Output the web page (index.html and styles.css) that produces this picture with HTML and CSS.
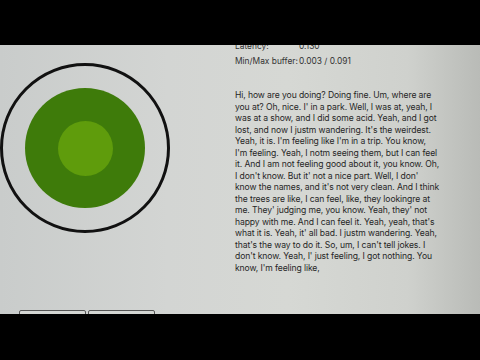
FILE: index.html
```html
<!DOCTYPE html>
<html>
<head>
<meta charset="utf-8">
<link rel="stylesheet" href="styles.css">
</head>
<body>
<div class="screen">
  <div class="page">
    <div class="left">
      <div class="ring">
        <div class="outer">
          <div class="inner"></div>
        </div>
      </div>
    </div>
    <div class="right">
      <div class="stats">
        <div class="stat"><span class="label">Latency:</span><span class="value">0.130</span></div>
        <div class="stat"><span class="label">Min/Max buffer:</span><span class="value">0.003 / 0.091</span></div>
      </div>
      <p class="transcript">Hi, how are you doing? Doing fine. Um, where are<br>you at? Oh, nice. I' in a park. Well, I was at, yeah, I<br>was at a show, and I did some acid. Yeah, and I got<br>lost, and now I justm wandering. It's the weirdest.<br>Yeah, it is. I'm feeling like I'm in a trip. You know,<br>I'm feeling. Yeah, I notm seeing them, but I can feel<br>it. And I am not feeling good about it, you know. Oh,<br>I don't know. But it' not a nice part. Well, I don'<br>know the names, and it's not very clean. And I think<br>the trees are like, I can feel, like, they lookingre at<br>me. They' judging me, you know. Yeah, they' not<br>happy with me. And I can feel it. Yeah, yeah, that's<br>what it is. Yeah, it' all bad. I justm wandering. Yeah,<br>that's the way to do it. So, um, I can't tell jokes. I<br>don't know. Yeah, I' just feeling, I got nothing. You<br>know, I'm feeling like,</p>
    </div>
  </div>
  <div class="buttons">
    <button class="btn"></button>
    <button class="btn"></button>
  </div>
  <div class="bar bar-top"></div>
  <div class="bar bar-bottom"></div>
</div>
</body>
</html>
```
FILE: styles.css
```css
html, body {
  margin: 0;
  padding: 0;
  width: 480px;
  height: 360px;
  overflow: hidden;
  background: #000;
}
.screen {
  position: relative;
  width: 480px;
  height: 360px;
  overflow: hidden;
  background: linear-gradient(90deg, #c9cccb 0%, #d3d5d3 35%, #d6d8d4 60%, #cfd1cd 85%, #b9bbb7 100%);
  font-family: Inter, "Noto Sans", sans-serif;
  color: #2b2b2b;
}
.page {
  display: grid;
  grid-template-columns: 235px 1fr;
  padding-top: 39px;
  height: 266px;
}
.left {
  padding: 24px 0 0 0;
}
.ring {
  width: 164px;
  height: 164px;
  border: 3px solid #111;
  border-radius: 50%;
  display: flex;
  align-items: center;
  justify-content: center;
}
.outer {
  width: 120px;
  height: 120px;
  border-radius: 50%;
  background: #3e7b0a;
  display: flex;
  align-items: center;
  justify-content: center;
}
.inner {
  width: 55px;
  height: 55px;
  border-radius: 50%;
  background: #5f9c0c;
}
.stats {
  font-size: 8.4px;
  line-height: 15px;
  color: #333;
}
.stat {
  display: flex;
  white-space: nowrap;
}
.label {
  width: 64px;
}
.transcript {
  margin: 21px 0 0 0;
  font-size: 8.6px;
  line-height: 11.5px;
  letter-spacing: -0.1px;
  white-space: nowrap;
  color: #262626;
}
.buttons {
  display: flex;
  gap: 2px;
  padding-left: 19px;
  margin-top: 5px;
}
.btn {
  width: 67px;
  height: 20px;
  border: 1px solid #555;
  border-radius: 2px;
  background: #d4d6d3;
  padding: 0;
}
.bar {
  position: absolute;
  left: 0;
  width: 480px;
  background: #000;
}
.bar-top {
  top: 0;
  height: 45px;
}
.bar-bottom {
  top: 314px;
  height: 46px;
}
```
